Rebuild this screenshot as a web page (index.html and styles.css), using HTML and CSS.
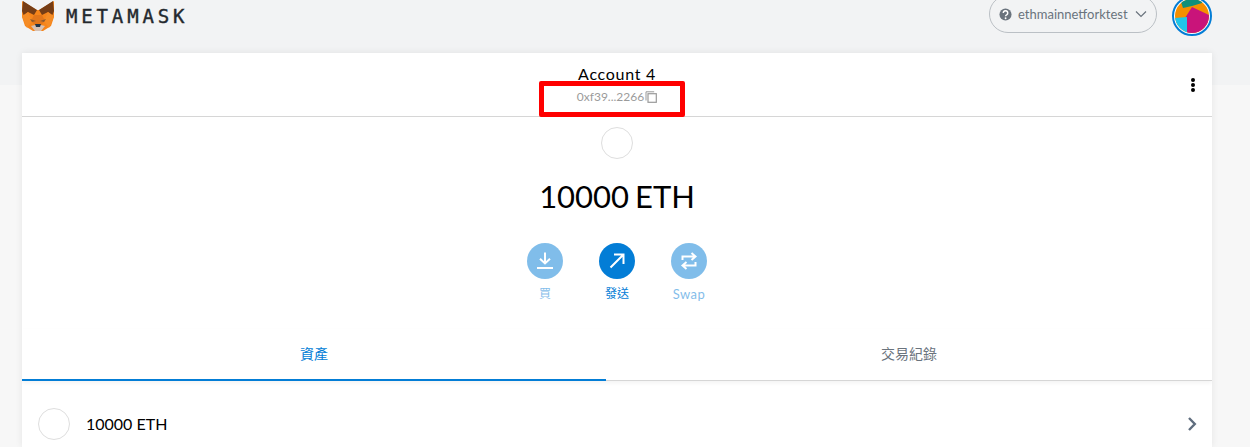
FILE: index.html
```html
<!DOCTYPE html>
<html lang="zh-Hant">
<head>
<meta charset="utf-8">
<title>MetaMask</title>
<link rel="stylesheet" href="styles.css">
</head>
<body>
<div class="page">
  <header class="topbar">
    <div class="brand">
      <svg class="fox" viewBox="0 0 32 30" width="32" height="30" aria-hidden="true">
        <polygon points="0,0 15,9 17,9 32,0 32,16 29,25 21,30 11,30 3,25 0,16" fill="#f6851b"/>
        <polygon points="1,0 15,9 12,14 6,11 2,15 0,10" fill="#763d16"/>
        <polygon points="31,0 17,9 20,14 26,11 30,15 32,10" fill="#763d16"/>
        <polygon points="12,14 20,14 23,20 18,25 14,25 9,20" fill="#e2761b"/>
        <polygon points="0,15 6,11 10,20 5,27" fill="#f58c26"/>
        <polygon points="32,15 26,11 22,20 27,27" fill="#f58c26"/>
        <polygon points="8,18 14,20 10,21" fill="#8a5a32"/>
        <polygon points="24,18 18,20 22,21" fill="#8a5a32"/>
        <polygon points="9,25 13,24 19,24 23,25 19,30 13,30" fill="#d7c1b3"/>
        <polygon points="13,23 19,23 18,26 14,26" fill="#233447"/>
      </svg>
      <span class="wordmark">METAMASK</span>
    </div>
    <div class="top-right">
      <button class="network">
        <svg class="help" viewBox="0 0 14 14" width="13" height="13" aria-hidden="true">
          <circle cx="7" cy="7" r="6.500" fill="#6a737d"/>
          <path d="M4.600 5.300a2.400 2.400 0 1 1 3.600 2.100c-.8.400-1.100.8-1.100 1.600" fill="none" stroke="#fff" stroke-width="1.600"/>
          <circle cx="7.100" cy="11" r="1" fill="#fff"/>
        </svg>
        <span>ethmainnetforktest</span>
        <svg class="caret" viewBox="0 0 12 8" width="12" height="8" aria-hidden="true"><path d="M1 1.500l5 5 5-5" fill="none" stroke="#6a737d" stroke-width="1.200"/></svg>
      </button>
      <div class="avatar">
        <svg viewBox="0 0 34 34" width="34" height="34" aria-hidden="true">
          <rect width="34" height="34" fill="#f58f00"/>
          <polygon points="5,0 27,0 27,4 17,7 8,9" fill="#0f8f7a"/>
          <polygon points="10,19 17,8 34,16 34,34 12,34" fill="#c9147a"/>
          <polygon points="0,19 12,18 12,34 0,34" fill="#1fc6ea"/>
        </svg>
      </div>
    </div>
  </header>

  <main class="card">
    <section class="account-bar">
      <div class="account-name">Account 4</div>
      <div class="address">
        <span>0xf39...2266</span>
        <svg viewBox="0 0 12 12" width="12" height="12" aria-hidden="true">
          <path d="M1 9.500V.8h8.200" fill="none" stroke="#9a9a9a" stroke-width="1"/>
          <rect x="3" y="2.700" width="8.300" height="8.600" fill="none" stroke="#9a9a9a" stroke-width="1.200"/>
        </svg>
      </div>
      <div class="dots"><i></i><i></i><i></i></div>
      <div class="highlight"></div>
    </section>

    <section class="overview">
      <div class="token-circle"></div>
      <div class="balance">10000 ETH</div>
      <div class="actions">
        <div class="action is-dim">
          <div class="action-btn">
            <svg viewBox="0 0 20 20" width="20" height="20" aria-hidden="true"><path d="M10 1.500v10.500M5 7.800l5 4.700 5-4.700M2 17h16" fill="none" stroke="#fff" stroke-width="2"/></svg>
          </div>
          <span class="action-label">買</span>
        </div>
        <div class="action">
          <div class="action-btn">
            <svg viewBox="0 0 20 20" width="20" height="20" aria-hidden="true"><path d="M3.500 16.500L16 4M7 3.500h9.500V13" fill="none" stroke="#fff" stroke-width="2"/></svg>
          </div>
          <span class="action-label">發送</span>
        </div>
        <div class="action is-dim">
          <div class="action-btn">
            <svg viewBox="0 0 20 20" width="20" height="20" aria-hidden="true"><path d="M3.500 9V5.500h12M12.500 2L16.500 5.500 12.500 9M16.500 11v3.500h-12M7.500 18L3.500 14.500 7.500 11" fill="none" stroke="#fff" stroke-width="2"/></svg>
          </div>
          <span class="action-label swap">Swap</span>
        </div>
      </div>
    </section>

    <nav class="tabs">
      <div class="tab is-active">資產</div>
      <div class="tab">交易紀錄</div>
    </nav>

    <section class="asset-row">
      <div class="asset-circle"></div>
      <div class="asset-text">10000 ETH</div>
      <svg class="chevron" viewBox="0 0 10 14" width="10" height="14" aria-hidden="true"><path d="M2 1L7.800 7 2 13" fill="none" stroke="#5f6d7e" stroke-width="2.400"/></svg>
    </section>
  </main>
</div>
</body>
</html>
```
FILE: styles.css
```css
* { box-sizing: border-box; }
html, body { margin: 0; height: 100%; overflow: hidden; }
body {
  background: linear-gradient(#f2f3f4 85px, #f7f7f7 85px);
  font-family: "Lato", "Noto Sans CJK TC", sans-serif;
  color: #000;
}
.page { width: 1250px; height: 447px; padding: 0 38px 0 22px; overflow: hidden; }

.topbar { height: 53px; display: flex; justify-content: space-between; align-items: flex-start; }
.brand { display: flex; align-items: center; gap: 12px; padding-top: 1px; height: 31px; }
.fox { display: block; }
.wordmark {
  font-family: "DejaVu Sans Mono", monospace;
  font-size: 19px;
  font-weight: 400;
  letter-spacing: 3.850px;
  color: #24292e;
  -webkit-text-stroke: .4px #24292e;
}
.top-right { display: flex; align-items: flex-start; gap: 15px; }
.network {
  margin-top: -5px;
  width: 168px; height: 38px;
  display: flex; align-items: center; gap: 6px;
  padding: 0 9px 0 9px;
  border: 1px solid #bbc0c5;
  border-radius: 19px;
  background: transparent;
  color: #6a737d;
  font-family: inherit;
  font-size: 13px;
}
.network span { flex: 1; text-align: left; white-space: nowrap; }
.network svg { flex: none; }
.avatar {
  margin-top: -4px;
  width: 40px; height: 40px;
  border: 2px solid #037dd6;
  border-radius: 50%;
  padding: 1px;
  background: #fff;
  overflow: hidden;
}
.avatar svg { display: block; border-radius: 50%; }

.card {
  background: #fff;
  height: 394px;
  box-shadow: 0 0 7px rgba(0, 0, 0, .08);
  overflow: hidden;
}
.account-bar {
  position: relative;
  height: 64px;
  border-bottom: 1px solid #d6d6d6;
  display: flex; flex-direction: column; align-items: center;
  padding-top: 11px;
}
.account-name { font-size: 16px; line-height: 19px; letter-spacing: .7px; }
.address {
  display: flex; align-items: center; gap: 1px;
  margin-top: 6px;
  color: #9b9b9b;
  font-size: 12px; line-height: 16px;
}
.dots {
  position: absolute; right: 17px; top: 25px;
  display: flex; flex-direction: column; gap: 1px;
}
.dots i { display: block; width: 4px; height: 4px; border-radius: 50%; background: #000; }
.highlight {
  position: absolute; left: 517px; top: 28px;
  width: 146px; height: 36px;
  border: 5px solid #ff0000;
  border-radius: 2px;
}

.overview { height: 212px; display: flex; flex-direction: column; align-items: center; padding-top: 10px; }
.token-circle { width: 32px; height: 32px; border: 1px solid #dedede; border-radius: 50%; }
.balance { margin-top: 17px; font-size: 31px; line-height: 40px; word-spacing: -2px; }
.actions { margin-top: 27px; display: flex; }
.action { width: 72px; display: flex; flex-direction: column; align-items: center; color: #037dd6; }
.action-btn {
  width: 36px; height: 36px; border-radius: 50%;
  background: #037dd6;
  display: flex; align-items: center; justify-content: center;
}
.action-label { margin-top: 6px; font-size: 12px; line-height: 18px; }
.swap { font-size: 13px; letter-spacing: .4px; }
.is-dim { opacity: .5; }

.tabs {
  height: 52px; display: grid; grid-template-columns: 584fr 606fr;
  border-bottom: 1px solid #d6d6d6;
  box-shadow: 0 2px 4px rgba(0, 0, 0, .05);
  position: relative;
}
.tab {
  display: flex; align-items: center; justify-content: center;
  font-size: 14px; color: #6a737d;
  padding-bottom: 4px;
}
.is-active { color: #037dd6; border-bottom: 2px solid #037dd6; margin-bottom: -1px; padding-bottom: 2px; }

.asset-row { height: 85px; display: flex; align-items: center; padding: 0 15px 0 16px; }
.asset-circle { width: 32px; height: 32px; border: 1px solid #dedede; border-radius: 50%; }
.asset-text { flex: 1; margin-left: 16px; font-size: 16px; }
```
